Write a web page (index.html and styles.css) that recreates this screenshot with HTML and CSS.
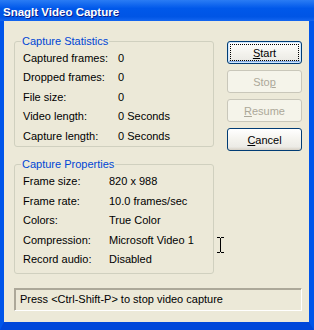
FILE: index.html
```html
<!DOCTYPE html>
<html>
<head>
    <title>SnagIt Video Capture</title>
    <link rel="stylesheet" href="styles.css">
</head>
<body>
    <div class="window">
        <div class="titlebar">SnagIt Video Capture</div>
        <div class="frame">
            <div class="client">
                <div class="top">
                    <div class="groups">
                        <fieldset class="group stats">
                            <legend>Capture Statistics</legend>
                            <div class="rows">
                                <span>Captured frames:</span><span>0</span>
                                <span>Dropped frames:</span><span>0</span>
                                <span>File size:</span><span>0</span>
                                <span>Video length:</span><span>0 Seconds</span>
                                <span>Capture length:</span><span>0 Seconds</span>
                            </div>
                        </fieldset>

                        <fieldset class="group props">
                            <legend>Capture Properties</legend>
                            <div class="rows">
                                <span>Frame size:</span><span>820 x 988</span>
                                <span>Frame rate:</span><span>10.0 frames/sec</span>
                                <span>Colors:</span><span>True Color</span>
                                <span>Compression:</span><span>Microsoft Video 1</span>
                                <span>Record audio:</span><span>Disabled</span>
                            </div>
                        </fieldset>
                    </div>

                    <div class="buttons">
                        <button class="xp-button default"><u>S</u>tart</button>
                        <button class="xp-button" disabled>Sto<u>p</u></button>
                        <button class="xp-button" disabled><u>R</u>esume</button>
                        <button class="xp-button"><u>C</u>ancel</button>
                    </div>
                </div>

                <div class="status">Press &lt;Ctrl-Shift-P&gt; to stop video capture</div>
            </div>
        </div>

        <!-- mouse cursor left over the dialog -->
        <svg class="ibeam" width="7" height="16" viewBox="0 0 7 16">
            <path d="M0 0.5H3M4 0.5H7M3.5 1V15M0 15.5H3M4 15.5H7" stroke="#000" stroke-width="1" fill="none"/>
        </svg>
    </div>
</body>
</html>
```

FILE: styles.css
```css
body {
    margin: 0;
    overflow: hidden;
    font-family: "Liberation Sans", Arial, sans-serif;
    font-size: 11px;
}

.window {
    position: relative;
    width: 314px;
    height: 330px;
    display: flex;
    flex-direction: column;
    background-color: #0047DA;
}

.titlebar {
    height: 21px;
    box-sizing: border-box;
    padding: 6px 0 0 3px;
    line-height: 13px;
    font-size: 11.5px;
    font-weight: bold;
    color: white;
    text-shadow: 1px 1px 0 #0A1E8C;
    background: linear-gradient(#2A7CF4, #0058EA 40%, #0055E5 80%, #1466F0);
}

.frame {
    flex: 1;
    display: flex;
    border-left: 4px solid #0055EA;
    border-right: 5px solid #0055EA;
    border-bottom: 8px solid #0047DA;
}

.client {
    flex: 1;
    display: flex;
    flex-direction: column;
    background-color: #ECE9D8;
    padding: 14px 7px 0 10px;
}

.top {
    display: flex;
    gap: 13px;
}

.groups {
    width: 200px;
    display: flex;
    flex-direction: column;
    gap: 11px;
}

.group {
    margin: 0;
    padding: 0 8px 0;
    border: 1px solid #D0D0BF;
    border-radius: 3px;
}

.group legend {
    margin-left: -2px;
    padding: 0 1px;
    line-height: 13px;
    color: #0046D5;
}

.rows {
    display: grid;
    grid-template-columns: 95px auto;
    grid-auto-rows: 19.5px;
    align-items: center;
    white-space: nowrap;
}

.props {
    padding-top: 1px;
    padding-bottom: 4px;
}

.props .rows {
    grid-template-columns: 86px auto;
}

.buttons {
    width: 75px;
    padding-top: 6px;
    display: flex;
    flex-direction: column;
    gap: 6px;
}

.xp-button {
    height: 23px;
    padding: 0;
    font-family: "Liberation Sans", Arial, sans-serif;
    font-size: 11px;
    color: black;
    border: 1px solid #003C74;
    border-radius: 3px;
    background: linear-gradient(#FFFFFF, #F4F3EE 50%, #ECEBE6 85%, #D6D0C5);
}

.xp-button.default {
    box-shadow: inset 0 0 0 1px #CEE7FF, inset 0 -1px 0 1px #89ADE4;
    outline: 1px dotted #000;
    outline-offset: -4px;
}

.xp-button:disabled {
    color: #ACA899;
    border-color: #C9C7BA;
    background: #F5F4EA;
}

.status {
    margin-top: 14px;
    height: 23px;
    box-sizing: border-box;
    padding-left: 5px;
    line-height: 21px;
    border: 1px solid;
    border-color: #ACA899 #FFFFFF #FFFFFF #ACA899;
    box-shadow: 1px 1px 0 #ACA899 inset;
}

.ibeam {
    position: absolute;
    left: 217px;
    top: 237px;
}
```
